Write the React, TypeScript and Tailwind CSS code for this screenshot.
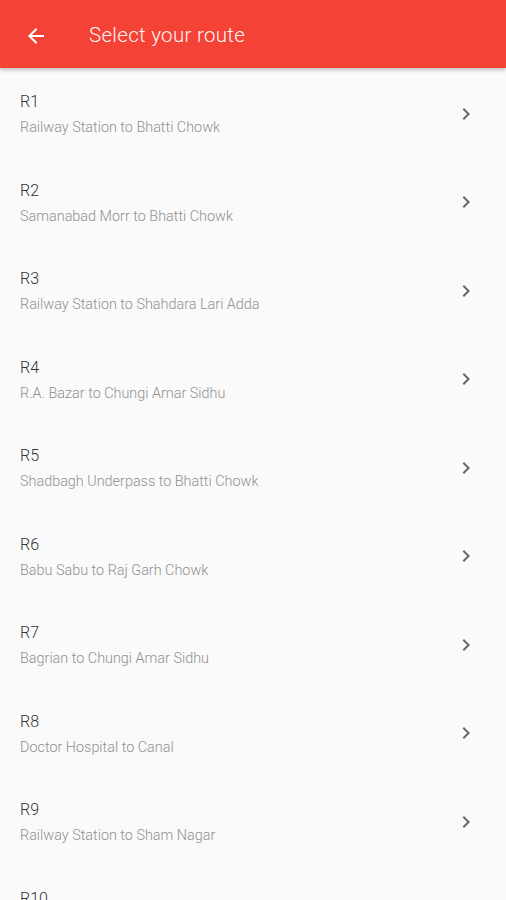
import React from "react";

const routes: [string, string][] = [
  ["R1", "Railway Station to Bhatti Chowk"],
  ["R2", "Samanabad Morr to Bhatti Chowk"],
  ["R3", "Railway Station to Shahdara Lari Adda"],
  ["R4", "R.A. Bazar to Chungi Amar Sidhu"],
  ["R5", "Shadbagh Underpass to Bhatti Chowk"],
  ["R6", "Babu Sabu to Raj Garh Chowk"],
  ["R7", "Bagrian to Chungi Amar Sidhu"],
  ["R8", "Doctor Hospital to Canal"],
  ["R9", "Railway Station to Sham Nagar"],
  ["R10", "Railway Station to Bhatti Chowk"],
];

export default function App() {
  return (
    <div
      className="w-[506px] h-[900px] overflow-hidden bg-[#fafafa] relative"
      style={{ fontFamily: "Roboto, 'Noto Sans', sans-serif" }}
    >
      <div className="relative z-10 h-[68px] bg-[#f44336] flex items-center shadow-[0_2px_4px_rgba(0,0,0,0.25)]">
        <div className="w-[70px] flex items-center justify-center pl-[1px] pt-[3px]">
          <svg width="24" height="24" viewBox="0 0 24 24" fill="none">
            <path d="M20 11H7.83l5.59-5.59L12 4l-8 8 8 8 1.41-1.41L7.83 13H20v-2z" fill="#fff" />
          </svg>
        </div>
        <div className="ml-[19px] pt-[3px] text-white text-[20.5px] font-light tracking-[0.3px] opacity-95">
          Select your route
        </div>
      </div>
      <div className="flex flex-col">
        {routes.map(([t, s]) => (
          <div key={t} className="h-[88.5px] shrink-0 flex items-center pl-5 pr-[28px]">
            <div className="flex-1 flex flex-col pt-[4px]">
              <div className="text-[16px] leading-[20px] text-[#333] font-light">{t}</div>
              <div className="mt-[7px] text-[14.4px] leading-[17px] text-[#909090] font-light">{s}</div>
            </div>
            <svg width="24" height="24" viewBox="0 0 24 24" fill="none" className="mt-[3px]">
              <path d="M8.59 16.59L13.17 12 8.59 7.41 10 6l6 6-6 6-1.41-1.41z" fill="#666" />
            </svg>
          </div>
        ))}
      </div>
    </div>
  );
}
